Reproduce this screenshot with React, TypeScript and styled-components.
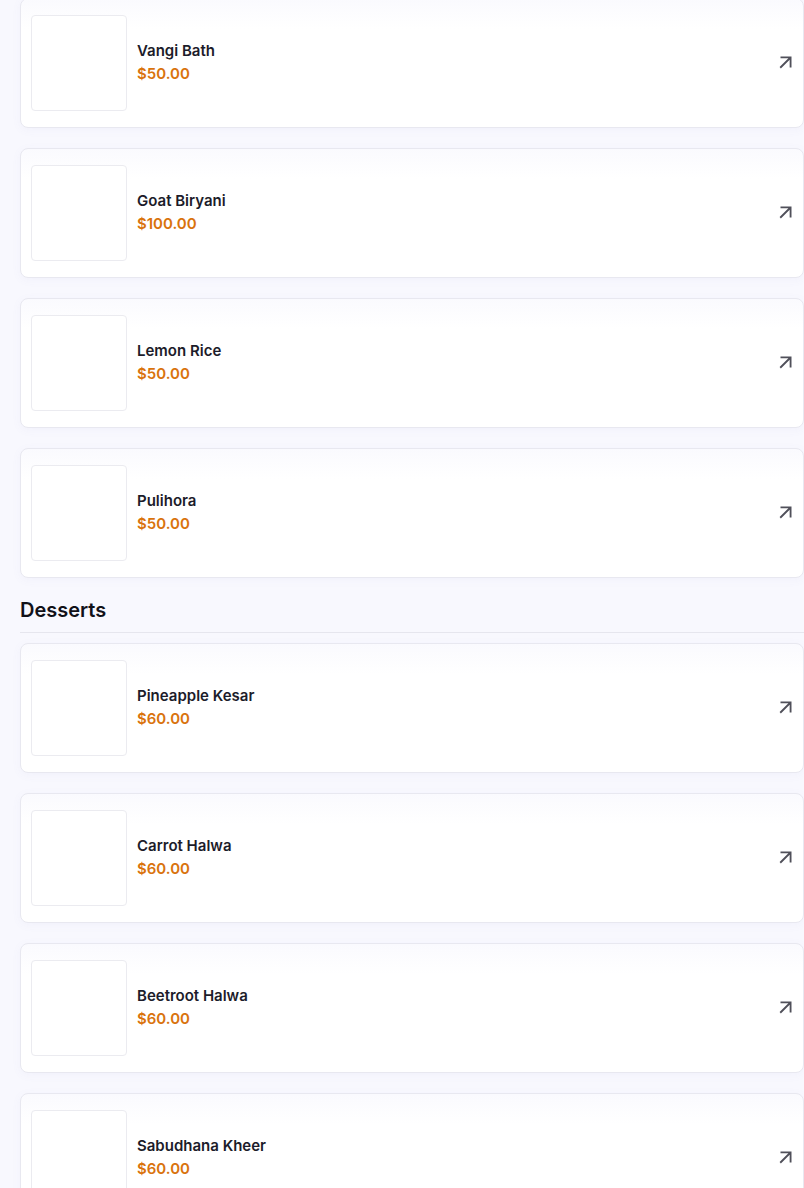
import React from 'react';
import styled, { createGlobalStyle } from 'styled-components';
import { MdArrowOutward } from 'react-icons/md';

const GlobalStyle = createGlobalStyle`
  html, body {
    margin: 0;
    padding: 0;
    background: #f8f8fe;
    font-family: Inter, "Noto Sans", "Liberation Sans", sans-serif;
    overflow: hidden;
  }
`;

const Page = styled.div`
  width: 784px;
  padding-left: 20px;
  margin-top: -2px;
`;

const Section = styled.section`
  display: flex;
  flex-direction: column;
  gap: 20px;
  margin-bottom: 20px;
`;

const SectionTitle = styled.h2`
  margin: 0 0 -10px;
  padding-bottom: 10px;
  font-size: 20px;
  line-height: 24px;
  font-weight: 600;
  color: #111118;
  border-bottom: 1px solid #e6e6ee;
`;

const Card = styled.div`
  display: flex;
  align-items: center;
  gap: 10px;
  padding: 16px 6px 16px 10px;
  background: linear-gradient(180deg, #fafafe 0px, #ffffff 30px);
  border: 1px solid #e8e8f0;
  border-radius: 8px;
  box-shadow: 0 2px 10px rgba(120, 120, 200, 0.05);
`;

const Thumb = styled.div`
  width: 94px;
  height: 94px;
  flex-shrink: 0;
  background: #ffffff;
  border: 1px solid #ebebf0;
  border-radius: 4px;
`;

const Info = styled.div`
  flex: 1;
  display: flex;
  flex-direction: column;
  gap: 3px;
  padding-bottom: 2px;
`;

const Name = styled.div`
  font-size: 15px;
  line-height: 20px;
  font-weight: 600;
  color: #1c1c2a;
`;

const Price = styled.div`
  font-size: 15px;
  line-height: 20px;
  font-weight: 600;
  color: #d9730d;
`;

const Action = styled.button`
  display: flex;
  align-items: center;
  justify-content: center;
  padding: 0 0 2px;
  border: none;
  background: none;
  color: #50505a;
  cursor: pointer;
`;

type Item = { name: string; price: number };

const mains: Item[] = [
  { name: 'Vangi Bath', price: 50 },
  { name: 'Goat Biryani', price: 100 },
  { name: 'Lemon Rice', price: 50 },
  { name: 'Pulihora', price: 50 },
];

const desserts: Item[] = [
  { name: 'Pineapple Kesar', price: 60 },
  { name: 'Carrot Halwa', price: 60 },
  { name: 'Beetroot Halwa', price: 60 },
  { name: 'Sabudhana Kheer', price: 60 },
];

const MenuCard: React.FC<{ item: Item }> = ({ item }) => (
  <Card>
    <Thumb />
    <Info>
      <Name>{item.name}</Name>
      <Price>${item.price.toFixed(2)}</Price>
    </Info>
    <Action aria-label="Open">
      <MdArrowOutward size={22} />
    </Action>
  </Card>
);

export default function App() {
  return (
    <>
      <GlobalStyle />
      <Page>
        <Section>
          {mains.map((i) => (
            <MenuCard key={i.name} item={i} />
          ))}
        </Section>
        <Section>
          <SectionTitle>Desserts</SectionTitle>
          {desserts.map((i) => (
            <MenuCard key={i.name} item={i} />
          ))}
        </Section>
      </Page>
    </>
  );
}
